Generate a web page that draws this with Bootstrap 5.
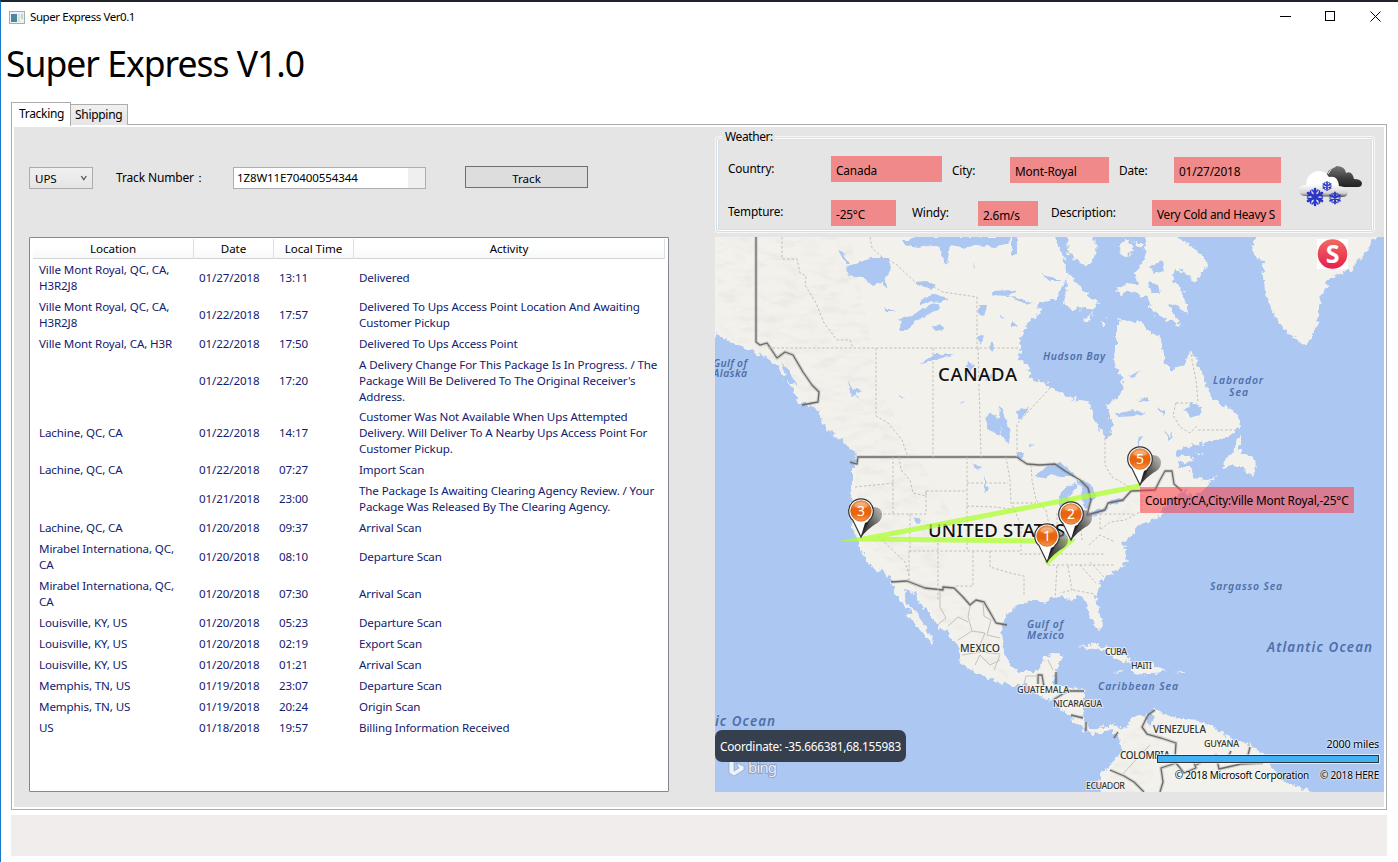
<!DOCTYPE html>
<html lang="en">
<head>
<meta charset="utf-8">
<title>Super Express Ver0.1</title>
<link href="https://cdn.jsdelivr.net/npm/bootstrap@5.3.0/dist/css/bootstrap.min.css" rel="stylesheet">
<style>
body{width:1398px;height:862px;overflow:hidden;background:#fff;color:#000;font-family:"Noto Sans","Open Sans",sans-serif;font-size:11.6px;line-height:16px;letter-spacing:-.06px;border-top:2px solid #20242c;border-left:1px solid #1979ca}
.titlebar{height:30px;padding-left:8px}
.titlebar .caption-text{font-size:11.5px;margin:-1px 0 0 5px;letter-spacing:-.42px}
.caption-btns{gap:34px;padding-right:17px;margin-top:-1px}
h1{height:69px;margin:0;padding:9px 0 0 5px;font-size:35.5px;line-height:45px;font-weight:400;letter-spacing:-1px}
.tabs-row{margin-left:10px;height:24px}
.tab-item{border:1px solid #acacac;font-size:12px;letter-spacing:-.3px;white-space:nowrap}
.tab-item.on{width:60px;height:24px;background:#fff;border-bottom:0;padding:3px 0 0 7px;z-index:2;margin-bottom:-1px;position:relative}
.tab-item.off{width:58px;height:21px;margin-left:-1px;background:linear-gradient(#f0f0f0,#e5e5e5);border-bottom:0;padding:2px 0 0 4px}
.tab-body{margin-left:10px;width:1376px;height:686px;margin-top:-1px;border:1px solid #acacac;padding:2px;background:#fff}
.work{background:#e5e5e5;height:100%;padding-left:15px}
.leftpane{width:640px}
.toolrow{height:110px;padding-top:40px}
.carrier{width:64px;height:22px;border:1px solid #acacac;background:linear-gradient(#f0f0f0,#e5e5e5);padding:1px 4px 0 5px}
.tracklabel{width:140px;padding-left:23px;padding-top:3px;font-size:12px;letter-spacing:-.15px;line-height:16px;height:20px}
.trackinput{width:193px;height:22px;border:1px solid #abadb3;background:#efefef}
.trackinput span{display:block;width:174px;height:100%;background:#fff;padding-left:3px;line-height:19px;letter-spacing:-.15px}
.trackbtn{width:123px;height:22px;margin:-1px 0 0 39px;border:1px solid #707070;border-radius:0;background:#ddd;padding:2px 0 0;font:inherit;color:#000;line-height:20px}
.listbox{height:555px;border:1px solid #828790;background:#fff;border-radius:1px;padding:1px 3px}
.listbox table{table-layout:fixed;width:632px;border-collapse:separate;border-spacing:0}
.listbox th{height:20px;font-weight:400;text-align:center;padding:0;border-right:1px solid #dfe0e2;border-bottom:1px solid #d5d5d5;background:linear-gradient(#fff,#fff 40%,#f7f8fa);line-height:19px}
.listbox td{padding:3px 0 2px 5px;white-space:nowrap;color:#13206f;vertical-align:middle;letter-spacing:-.12px}
.listbox td:first-child{padding-left:6px}
.listbox tr.tight td{padding-top:2px}
.rightpane{width:669px;margin-left:46px}
.weather{position:relative;width:658px;height:95px;margin-left:1px;border:1px solid #d5dfe5;border-radius:3px;box-shadow:inset 0 0 0 1px #fff,inset 0 0 0 2px #d5dfe5,0 0 0 1px rgba(255,255,255,.7);margin-top:10px;margin-bottom:5px;padding:18px 0 0 11px}
.weather .legend{position:absolute;left:5px;top:-9px;background:#e5e5e5;padding:0 2px 0 3px;font-size:12px;letter-spacing:-.4px}
.wrow{font-size:11.8px;letter-spacing:-.15px}
.wrow.one{height:44px}
.field{background:#f08a8a;padding-left:5px;height:26px;line-height:28px;white-space:nowrap;overflow:hidden}
.wicon{position:absolute;left:580px;top:27px}
.mapbox{position:relative;width:669px;height:555px;background:#acc7f2;overflow:hidden}
.mapbox>svg{display:block}
.coord{position:absolute;left:0;top:493px;width:191px;height:32px;border-radius:7px;background:#363f4d;color:#fff;padding-left:5px;line-height:33px;white-space:nowrap;font-size:11.8px;letter-spacing:-.25px}
.pin-tip{position:absolute;left:425px;top:250px;width:214px;height:26px;background:rgba(255,60,70,.55);padding-left:5px;line-height:27px;white-space:nowrap;font-size:11.8px;letter-spacing:-.18px}
.scalebar{position:absolute;right:5px;top:518px;width:222px;height:8px;background:#41b2f5;border:1px solid #333;outline:1px solid rgba(255,255,255,.6)}
.mapnote{position:absolute;right:5px;white-space:nowrap;text-shadow:0 0 2px #fff,0 0 2px #fff;font-size:10.8px;letter-spacing:-.2px}
.statusbar{margin:5px 0 0 10px;width:1376px;height:41px;background:#f0edec}
</style>
</head>
<body>
<header class="titlebar d-flex align-items-center">
  <svg width="16" height="13" viewBox="0 0 16 13"><rect x=".5" y=".5" width="15" height="12" fill="#eef1f4" stroke="#a9adb3"/><rect x="2" y="3" width="6" height="8" fill="#3f8f8c"/><path d="M2 3h6v3L2 9z" fill="#557fae"/><rect x="9" y="3" width="2" height="8" fill="#dcdfe4"/><rect x="12" y="3" width="2" height="5" fill="#b9dcc9"/></svg>
  <span class="caption-text">Super Express Ver0.1</span>
  <div class="caption-btns d-flex ms-auto align-items-center">
    <svg width="11" height="11"><path d="M0 5.5h11" stroke="#000"/></svg>
    <svg width="11" height="11"><rect x=".5" y=".5" width="9" height="9" fill="none" stroke="#000"/></svg>
    <svg width="11" height="11"><path d="M.5.5l10 10M10.5.5l-10 10" stroke="#000"/></svg>
  </div>
</header>
<h1>Super Express V1.0</h1>
<div class="tabs-row d-flex align-items-end">
  <div class="tab-item on">Tracking</div>
  <div class="tab-item off">Shipping</div>
</div>
<main class="tab-body">
<div class="work d-flex">
  <section class="leftpane">
    <div class="toolrow d-flex align-items-start">
      <div class="carrier d-flex align-items-center justify-content-between"><span>UPS</span><svg width="8" height="7" viewBox="0 0 8 7"><path d="M1.3 1l2.5 3.6L6.300 1" fill="none" stroke="#555" stroke-width="1.3"/></svg></div>
      <div class="tracklabel">Track Number：</div>
      <div class="trackinput"><span>1Z8W11E70400554344</span></div>
      <button class="trackbtn btn">Track</button>
    </div>
    <div class="listbox">
      <table>
        <colgroup><col style="width:161px"><col style="width:80px"><col style="width:80px"><col style="width:311px"></colgroup>
        <thead><tr><th>Location</th><th>Date</th><th>Local Time</th><th>Activity</th></tr></thead>
        <tbody>
        <tr><td>Ville Mont Royal, QC, CA,<br>H3R2J8</td><td>01/27/2018</td><td>13:11</td><td>Delivered</td></tr>
        <tr><td>Ville Mont Royal, QC, CA,<br>H3R2J8</td><td>01/22/2018</td><td>17:57</td><td>Delivered To Ups Access Point Location And Awaiting<br>Customer Pickup</td></tr>
        <tr><td>Ville Mont Royal, CA, H3R</td><td>01/22/2018</td><td>17:50</td><td>Delivered To Ups Access Point</td></tr>
        <tr><td></td><td>01/22/2018</td><td>17:20</td><td>A Delivery Change For This Package Is In Progress. / The<br>Package Will Be Delivered To The Original Receiver's<br>Address.</td></tr>
        <tr class="tight"><td>Lachine, QC, CA</td><td>01/22/2018</td><td>14:17</td><td>Customer Was Not Available When Ups Attempted<br>Delivery. Will Deliver To A Nearby Ups Access Point For<br>Customer Pickup.</td></tr>
        <tr><td>Lachine, QC, CA</td><td>01/22/2018</td><td>07:27</td><td>Import Scan</td></tr>
        <tr><td></td><td>01/21/2018</td><td>23:00</td><td>The Package Is Awaiting Clearing Agency Review. / Your<br>Package Was Released By The Clearing Agency.</td></tr>
        <tr><td>Lachine, QC, CA</td><td>01/20/2018</td><td>09:37</td><td>Arrival Scan</td></tr>
        <tr><td>Mirabel Internationa, QC,<br>CA</td><td>01/20/2018</td><td>08:10</td><td>Departure Scan</td></tr>
        <tr><td>Mirabel Internationa, QC,<br>CA</td><td>01/20/2018</td><td>07:30</td><td>Arrival Scan</td></tr>
        <tr><td>Louisville, KY, US</td><td>01/20/2018</td><td>05:23</td><td>Departure Scan</td></tr>
        <tr><td>Louisville, KY, US</td><td>01/20/2018</td><td>02:19</td><td>Export Scan</td></tr>
        <tr><td>Louisville, KY, US</td><td>01/20/2018</td><td>01:21</td><td>Arrival Scan</td></tr>
        <tr><td>Memphis, TN, US</td><td>01/19/2018</td><td>23:07</td><td>Departure Scan</td></tr>
        <tr><td>Memphis, TN, US</td><td>01/19/2018</td><td>20:24</td><td>Origin Scan</td></tr>
        <tr><td>US</td><td>01/18/2018</td><td>19:57</td><td>Billing Information Received</td></tr>
        </tbody>
      </table>
    </div>
  </section>
  <section class="rightpane">
    <div class="weather">
      <div class="legend">Weather:</div>
      <div class="wrow one d-flex">
        <div style="width:103px;padding-top:4px">Country:</div><div class="field" style="width:111px">Canada</div>
        <div style="width:68px;padding:6px 0 0 10px">City:</div><div class="field" style="width:99px;margin-top:1px">Mont-Royal</div>
        <div style="width:65px;padding:6px 0 0 10px">Date:</div><div class="field" style="width:107px;margin-top:1px">01/27/2018</div>
      </div>
      <div class="wrow d-flex">
        <div style="width:103px;padding-top:3px">Tempture:</div><div class="field" style="width:65px">-25°C</div>
        <div style="width:82px;padding:4px 0 0 16px">Windy:</div><div class="field" style="width:60px;margin-top:1px;height:25px">2.6m/s</div>
        <div style="width:114px;padding:4px 0 0 13px">Description:</div><div class="field" style="width:129px;letter-spacing:-.25px">Very Cold and Heavy S</div>
      </div>
      <svg class="wicon" width="66" height="44" viewBox="1297 164 66 44">
        <defs>
          <linearGradient id="dk" x1="0" y1="0" x2="0" y2="1"><stop offset="0" stop-color="#777"/><stop offset=".6" stop-color="#3c3c3c"/><stop offset="1" stop-color="#222"/></linearGradient>
          <linearGradient id="wh" x1="0" y1="0" x2="0" y2="1"><stop offset=".5" stop-color="#fff"/><stop offset=".85" stop-color="#d5d5d5"/><stop offset="1" stop-color="#555"/></linearGradient>
          <g id="flake" stroke="#2a36c8" stroke-linecap="round"><path d="M0-8V8M-7-4L7 4M-7 4L7-4" stroke-width="2.600"/><path d="M-3-7L0-4 3-7M-3 7L0 4 3 7M-7.500-1L-4-2-4.500-6M7.500 1L4 2 4.500 6M-7.500 1L-4 2-4.500 6M7.500-1L4-2 4.500-6" stroke-width="1.500" fill="none"/></g>
        </defs>
        <path d="M1326 175q3-8 10-10 9 0 10 7 6-3 8 6 7 0 8 4 0 4-4 4h-24q-8-3-8-11z" fill="url(#dk)"/>
        <path d="M1328 173q3-7 8-8" fill="none" stroke="#eee"/>
        <path d="M1304 195q-5-1-5-6 0-5 7-5 1-12 11-14 8-1 12 6 9-2 10 9 9 1 9 6 0 5-6 5z" fill="url(#wh)"/>
        <use href="#flake" transform="translate(1315 196)"/><use href="#flake" transform="translate(1335 197) scale(.7)"/><use href="#flake" transform="translate(1327 185) scale(.55)"/>
      </svg>
    </div>
    <div class="mapbox">
      <svg width="669" height="555" viewBox="715 237 669 555" font-family="Noto Sans,Open Sans,sans-serif">
        <defs>
          <filter id="coast" x="-2%" y="-2%" width="104%" height="104%"><feTurbulence type="fractalNoise" baseFrequency=".2" numOctaves="2" seed="4"/><feDisplacementMap in="SourceGraphic" scale="9" xChannelSelector="R" yChannelSelector="G"/></filter>
          <filter id="fine" x="-2%" y="-2%" width="104%" height="104%"><feTurbulence type="fractalNoise" baseFrequency=".2" numOctaves="1" seed="9"/><feDisplacementMap in="SourceGraphic" scale="5" xChannelSelector="R" yChannelSelector="G"/></filter>
          <filter id="relief" x="0" y="0" width="100%" height="100%"><feTurbulence type="fractalNoise" baseFrequency=".05 .13" numOctaves="3" seed="7"/><feColorMatrix values="0 0 0 0 .5  0 0 0 0 .5  0 0 0 0 .45  1.3 0 0 0 -.57"/><feComposite in2="SourceAlpha" operator="in"/></filter>
          <linearGradient id="orb" x1="0" y1="0" x2="0" y2="1"><stop offset="0" stop-color="#f7a25d"/><stop offset=".4" stop-color="#e8650e"/><stop offset=".65" stop-color="#e8650e"/><stop offset="1" stop-color="#f79a50"/></linearGradient>
          <linearGradient id="shade" x1="0" y1="1" x2="1" y2="0"><stop offset="0" stop-color="#222"/><stop offset=".5" stop-color="#444" stop-opacity=".85"/><stop offset="1" stop-color="#888" stop-opacity=".5"/></linearGradient>
          <linearGradient id="sred" x1="0" y1="0" x2="0" y2="1"><stop offset="0" stop-color="#f06a62"/><stop offset="1" stop-color="#e6204c"/></linearGradient>
          <g id="pin">
            <path d="M0 0L8-20 12-30q9 0 9 8 0 6-8 10Q8-9 0 0z" fill="url(#shade)"/>
            <path d="M0 0L-8-16.500A12.300 12.300 0 1 1 8-16.500Z" fill="#fff" stroke="#333" stroke-width="1.200"/>
            <path d="M0-1L4-14 8-16z" fill="#222"/>
            <circle cy="-26" r="10.300" fill="url(#orb)" stroke="#c3570f" stroke-width=".6"/>
            <ellipse cy="-31.500" rx="6.500" ry="3" fill="#fff" opacity=".3"/>
          </g>
        </defs>
        <g fill="#f2f1ec" filter="url(#coast)">
          <path d="M700 225V333L722 336 730 342 742 347 764 357 777 365 786 380 794 391 799 403 814 405 822 420 829 431 838 438 849 447 857 456 857 462 852 468 852 487 850 507 851 527 856 537 858 546 866 558 872 568 884 572 891 578 893 587 897 597 904 607 912 610 906 615 914 622 922 633 934 644 932 637 926 628 922 620 914 610 907 602 904 589 913 592 919 602 931 615 937 625 947 633 956 643 961 653 959 662 971 670 987 677 1001 683 1014 686 1024 683 1032 688 1039 697 1051 700 1063 711 1072 720 1083 728 1092 735 1102 733 1113 730 1119 738 1121 752 1112 765 1101 773 1100 782 1102 804H1330L1312 792 1297 785 1280 780 1273 768 1263 753 1250 745 1233 740 1217 730 1205 722 1197 720 1183 718 1173 717 1163 713 1153 708 1148 715 1133 717 1128 723 1122 731 1115 725 1107 725 1093 730 1087 723 1082 717 1083 708 1083 698 1087 691 1070 687 1053 685 1055 675 1057 667 1063 655 1055 653 1044 657 1042 667 1034 672 1021 672 1011 665 1003 652 1001 632 1006 615 1014 607 1024 602 1034 601 1047 603 1051 597 1060 597 1072 600 1080 597 1087 603 1088 613 1095 627 1100 630 1102 622 1098 608 1095 597 1098 588 1105 578 1122 567 1128 557 1123 543 1132 535 1140 525 1160 517 1162 510 1167 502 1180 494 1193 485 1186 491 1194 497 1208 485 1218 476 1205 480 1193 477 1189 467 1177 467 1180 458 1177 453 1183 447 1207 443 1232 435 1240 428 1238 415 1227 407 1213 400 1205 383 1197 360 1190 350 1185 365 1173 370 1165 365 1162 336 1150 333 1142 323 1117 319 1117 346 1113 359 1123 383 1122 393 1107 406 1112 423 1110 436 1105 438 1098 428 1092 418 1090 403 1070 398 1050 387 1038 379 1032 381 1028 366 1018 359 1022 333 1030 321 1042 311 1036 304 1057 299 1063 286 1070 274 1083 291 1100 303 1095 308 1072 310 1064 303 1068 276 1065 261 1057 243 1055 225Z"/>
          <path d="M1067 225L1093 230 1096 253 1087 266 1073 259 1068 253Z"/>
          <path d="M1147 225L1177 237 1197 250 1208 263 1195 284 1186 273 1177 268 1172 276 1183 293 1189 316 1167 303 1182 326 1165 319 1153 313 1147 298 1133 292 1117 294 1115 286 1137 283 1135 273 1145 259Z"/>
          <ellipse cx="1126" cy="248" rx="6" ry="8"/><path d="M1082 320l10-7-2 7-6 2zM1102 320l4 0 0 8-3 0zM1133 241l9 3-2 3z"/>
          <path d="M1262 225L1253 245 1252 253 1263 262 1265 293 1277 320 1287 333 1307 346 1313 335 1317 323 1320 300 1330 277 1350 270 1370 247 1382 225Z"/>
          <path d="M1240 435L1233 450 1222 467 1240 466 1253 476 1257 465 1250 455 1240 452Z"/>
          <path d="M1177 458q8-5 16 1l-6 5q-6 0-10-6zM1194 450l10 5-4 1z"/>
          <path d="M1078 647L1093 643 1110 648 1134 661 1122 662 1103 650ZM1133 665l15-2 20 8-18 3-17-1zM1176 672l8-1-1 2zM1113 672l9-1-1 3z"/>
        </g>
        <path fill="#888" filter="url(#relief)" opacity=".3" d="M715 237H850L880 390 960 530 940 575 990 640 1010 680 955 640 900 570 860 540 855 460 800 390 720 330zM1100 540L1125 515 1160 495 1130 500zM1125 735L1165 715 1150 792H1105z"/>
        <g fill="#acc7f2" filter="url(#fine)">
          <path d="M903 240l6 0 5-3h98l-4 6-12 4-20-2-10 4-14-3-12 2-12-3-10 2-14-3zM1012 237h5l0 18-5 0zM938 245l12-2-3 24zM847 267l24-9 18 0 2 10-8 14-10 4-10-9-14-1zM838 250l5 2 7 12-4 0zM884 277l4 12-6-4zM914 282l12-1 10 4-4 4-12-3zM920 300l14-6 14 4-6 4-14-1-8 5zM897 320l14-4 20-12 6-1 3 5-10 6-12 6-12 10-8 0 4-9zM932 328l8-4 4 5-7 2zM884 307l12 5-10 0z"/>
          <path d="M1040 274l14 4 8 3-12 0zM990 291l26-1-8 6-16-1zM1010 296l26 8-16-1zM979 305l8 1-3 10-5-2zM1000 314l5 5-4-2zM976 338l8-3-3 10zM991 341l3 0-1 12-3-4zM1012 321l6 4-6 2zM972 264l3 2-1 3z"/>
          <path d="M920 364l14-10 20 0-12 4-20 6zM848 382l6 7 8 1-6 3 4 7-5-5-4 1zM898 396l8 2-6 0zM968 362l7 3-7 12-3-8zM985 377l10-3-8 8zM960 402l5-2-4 4zM985 420l5-8 10 7 0 16-12-5zM1000 405l4 10 6 14-1 15-8-10-2-16zM1016 411l12-3-6 10-4 2zM1017 453l7 0-2 7-5-3zM1029 444l6 1-5 1z"/>
          <path d="M1115 414l18-4 14 3-12 3-16 1zM1128 376l12-5-5 6zM1138 401l10-5 0 5zM1156 408l8 2 0 5zM1184 410l8-7 10 4-2 8-10 3zM1164 430l5 7 3-6-1 8-3 2zM1136 450l3-14 4-1zM1150 267l12-6 2 10-10 3zM1148 282l10 3 2 8-8 0zM1170 303l8 3 8 12-10-6z"/>
          <path d="M1035 477L1045 468 1056 463 1061 463 1077 477 1070 477 1060 477 1051 474 1045 478ZM1061 491l14-8 4 2-9 9-2 11-3 9-6-1 0-13zM1077 480l13 3 6 14-5 6-5 7-4-9-1-13zM1087 517l10-8 12-2-12 8zM1108 502l15-5 1 4-14 4z"/>
          <path d="M1149 709l5 9-4 8-4-8zM914 516l7 3-1 5-5-2zM972 463l6 4 5 1-6 2zM984 475l2 10 3 3-3 6-2-8zM780 362l10 10 6 12-7 0z"/>
        </g>
        <defs><path id="bord" d="M756 237V342L760 345 767 343 777 358 785 352 793 355 803 372 812 385 819 392 818 402 802 405M850 462L857 464 858 457H1017L1021 460 1027 464 1040 465 1055 464 1065 471 1080 480 1088 488 1091 500 1087 515 1105 510 1108 503 1123 500 1131 491 1155 490 1160 480 1165 471 1172 471 1174 484 1182 491M891 582L907 581 925 588 943 590 943 587 954 588 963 597 970 605 976 600 984 602 991 614 996 623 1007 625M1038 684v-9h4l2 12M1056 672v12M1053 700l8-5 6-4 17 0M1071 715l12 3M1086 722l0 9M1114 738l4-6M1155 710l-7 5-6 12 5 7 14 4 15 5-1 15M1110 770l14 6 10 6 10 10M1160 792l3-10-2-14 15-5 8 10 12-5-3-8M1196 765l20-10 3 14 22-5 22-1M1231 751l-6 12M1250 747l-3 12"/></defs>
        <g fill="none" stroke-linejoin="round"><use href="#bord" stroke="#777" stroke-opacity=".25" stroke-width="3.500"/><use href="#bord" stroke="#6b6b6b" stroke-width="1.300"/></g>
        <g fill="none" stroke="#c2bfb8" stroke-dasharray="2.500 2">
          <path d="M782 237V259H797L800 273 806 276 805 285 816 303 824 323 837 340H850L853 348M768 348H1018M870 237L872 248 882 257 896 264 915 282 930 285 943 292 977 297V348M876 348V416L888 423 902 440 908 457M933 348V457M978 348L981 457M1050 388L1017 424V457M1105 438V465L1112 477 1130 487"/>
          <path d="M893 457V514M899 457L901 470 910 480 913 493 926 496V491H967M855 487L895 483M879 514H926V491M967 457V551M967 483H1008M967 506L995 507 1010 509M1006 457L1010 480 1011 503 1016 513 1021 526V551M910 514V551M938 525V600M909 551H1021M909 551V582M973 551V586H956M990 551V567L1010 573 1024 576V595M878 536L905 562 909 575M926 525H967M1031 465L1032 480 1036 500 1046 510 1050 530M1012 503H1036M1057 513V535L1062 545M1020 554H1105M1048 565H1115M1057 566L1055 600M1068 566L1072 590 1060 593M1073 590L1095 594M1080 565L1096 583M1090 562L1105 578M1100 513V530L1110 522 1125 520 1140 512M1080 520L1082 540M1089 545L1100 535 1115 542M1100 514H1133M1142 495V512M1190 350L1196 380 1198 402M1198 430H1235M1176 403H1192M1176 403L1173 415 1180 427 1190 433 1198 425"/>
        </g>
        <g fill="none" stroke="#c5c2bc"><path d="M940 591L940 607 946 618 935 627M970 606L968 617 972 631 958 640M968 622L958 617 948 626M983 602L984 616 991 620 987 635 1000 638M972 631L985 633 980 645M962 655L980 652 1000 654M975 665L980 655 990 665 1000 660M1000 655L994 670M1024 684L1026 676 1038 676M1048 660L1053 670M1122 775L1140 755 1150 745"/></g>
        <g text-anchor="start" fill="#111" stroke="#f7f7f3" stroke-width="2" paint-order="stroke" stroke-opacity=".7">
          <text x="938" y="381" font-size="18.500" textLength="79" font-weight="500">CANADA</text>
          <text x="928" y="537" font-size="18.500" textLength="137" font-weight="500">UNITED STATES</text>
          <g fill="#333" font-weight="500">
          <text x="960" y="652" font-size="10.500" textLength="40">MEXICO</text>
          <text x="1017" y="693" font-size="9" textLength="52">GUATEMALA</text>
          <text x="1053" y="707" font-size="9" textLength="49">NICARAGUA</text>
          <text x="1105" y="655" font-size="9" textLength="22">CUBA</text>
          <text x="1131" y="669" font-size="9" textLength="21">HAITI</text>
          <text x="1153" y="733" font-size="10" textLength="53">VENEZUELA</text>
          <text x="1204" y="747" font-size="9" textLength="35">GUYANA</text>
          <text x="1120" y="759" font-size="10" textLength="50">COLOMBIA</text>
          <text x="1086" y="789" font-size="9" textLength="39">ECUADOR</text>
          </g>
        </g>
        <g fill="#4f6fa9" font-style="italic" font-weight="600" font-size="10.400">
          <text x="1043" y="360" textLength="62">Hudson Bay</text>
          <text x="1213" y="384" textLength="50">Labrador</text><text x="1229" y="396" textLength="19">Sea</text>
          <text x="713" y="367" textLength="34">Gulf of</text><text x="713" y="377" textLength="34">Alaska</text>
          <text x="1210" y="590" textLength="72">Sargasso Sea</text>
          <text x="1027" y="628" textLength="36">Gulf of</text><text x="1027" y="639" textLength="37">Mexico</text>
          <text x="1098" y="690" textLength="80">Caribbean Sea</text>
          <text x="1267" y="652" font-size="13.400" textLength="105">Atlantic Ocean</text>
          <text x="715" y="726" font-size="13.400" textLength="60">ic Ocean</text>
        </g>
        <polyline points="1140,486 863,539 1070,541.500 1046,563.500" fill="none" stroke="#adff2f" stroke-opacity=".75" stroke-width="5" stroke-miterlimit="30"/>
        <g fill="#fff" font-size="14" text-anchor="middle">
          <use href="#pin" x="1140" y="485"/><text x="1140" y="464">5</text>
          <use href="#pin" x="861" y="537"/><text x="861" y="516">3</text>
          <use href="#pin" x="1071" y="540"/><text x="1071" y="519">2</text>
          <use href="#pin" x="1047" y="562"/><text x="1047" y="541">1</text>
        </g>
        <rect x="1317" y="239" width="31" height="30" fill="#fff"/><circle cx="1332.500" cy="254" r="14.800" fill="url(#sred)"/>
        <text x="1332.500" y="263" text-anchor="middle" font-family="Open Sans,sans-serif" font-weight="700" font-size="25" fill="#fff">S</text>
        <path d="M729 759l5 2v10l5-3-3-5 8 3v4l-10 6-5-3z" fill="#eef3fb" stroke="#8fa3bd" stroke-width=".7"/>
        <text x="748" y="773" font-size="15" textLength="29" fill="#e8eefa" stroke="#8a99b0" stroke-width="1.500" paint-order="stroke">bing</text>
      </svg>
      <div class="coord">Coordinate: -35.666381,68.155983</div>
      <div class="pin-tip">Country:CA,City:Ville Mont Royal,-25°C</div>
      <div class="mapnote" style="top:499px">2000 miles</div>
      <div class="scalebar"></div>
      <div class="mapnote d-flex" style="top:530px;gap:11px;font-size:10px"><span>© 2018 Microsoft Corporation</span><span>© 2018 HERE</span></div>
    </div>
  </section>
</div>
</main>
<footer class="statusbar"></footer>
<script src="https://cdn.jsdelivr.net/npm/bootstrap@5.3.0/dist/js/bootstrap.bundle.min.js"></script>
</body>
</html>
